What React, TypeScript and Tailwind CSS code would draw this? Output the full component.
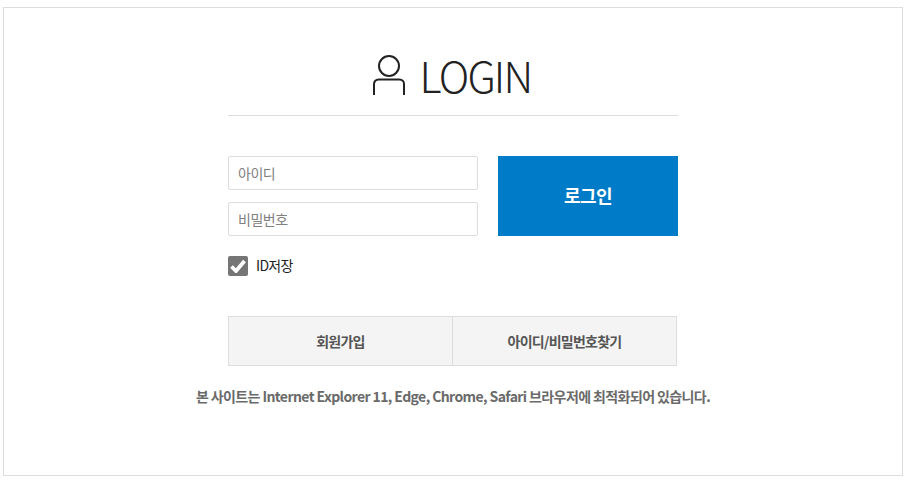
const FONT = "font-['Noto_Sans_CJK_KR','Noto_Sans',sans-serif]";

export default function App() {
  return (
    <div className={`min-h-[485px] bg-white pt-[7px] pl-[3px] tracking-[-0.5px] ${FONT}`}>
      <div className="w-[900px] h-[469px] border border-[#dddddd] bg-white">
        <div className="w-[450px] ml-[224px] pt-[40px]">
          {/* 타이틀 */}
          <div className="h-[68px] border-b border-[#dddddd] flex items-start justify-center gap-[15px]">
            <svg width="32" height="40" viewBox="0 0 32 40" fill="none" stroke="#222222" strokeWidth="2" className="mt-[7px]">
              <circle cx="16" cy="11" r="10" />
              <path d="M1 40V29a4.500 4.500 0 0 1 4.500-4.500h21A4.500 4.500 0 0 1 31 29v11" />
            </svg>
            <h1 className="mr-[2px] text-[42px] leading-[54px] font-light text-[#222222] tracking-[-1.8px]">LOGIN</h1>
          </div>

          {/* 로그인 폼 */}
          <div className="flex justify-between mt-[40px]">
            <div className="w-[250px] flex flex-col gap-[12px]">
              <input
                placeholder="아이디"
                className="h-[34px] w-full border border-[#dddddd] rounded-[2px] px-[9px] text-[14px] outline-none placeholder:text-[#808080]"
              />
              <input
                placeholder="비밀번호"
                className="h-[34px] w-full border border-[#dddddd] rounded-[2px] px-[9px] text-[14px] outline-none placeholder:text-[#808080]"
              />
            </div>
            <button className="w-[180px] h-[80px] bg-[#007bc7] text-white text-[18px] font-bold pb-[1px]">로그인</button>
          </div>

          <label className="flex items-center gap-[8px] mt-[19px] h-[21px]">
            <span className="w-[20px] h-[20px] rounded-[2px] bg-[#757575] flex items-center justify-center">
              <svg width="16" height="14" viewBox="0 0 16 14" fill="none" stroke="#ffffff" strokeWidth="3.800">
                <path d="M1.500 7.500l4.500 4.500L14.500 2" />
              </svg>
            </span>
            <span className="text-[14px] text-[#222222] tracking-[-0.7px]">ID저장</span>
          </label>

          {/* 회원가입 / 찾기 */}
          <div className="flex w-[449px] h-[50px] mt-[40px] border border-[#dddddd] bg-[#f4f4f4] text-[14px] font-bold text-[#555555] tracking-[-0.75px]">
            <a className="w-[224px] flex items-center justify-center border-r border-[#dddddd]">회원가입</a>
            <a className="flex-1 flex items-center justify-center">아이디/비밀번호찾기</a>
          </div>
        </div>

        <p className="mt-[20px] text-center text-[14px] font-bold text-[#6a6a6a] tracking-[-0.6px] whitespace-nowrap">
          본 사이트는 Internet Explorer 11, Edge, Chrome, Safari 브라우저에 최적화되어 있습니다.
        </p>
      </div>
    </div>
  );
}
